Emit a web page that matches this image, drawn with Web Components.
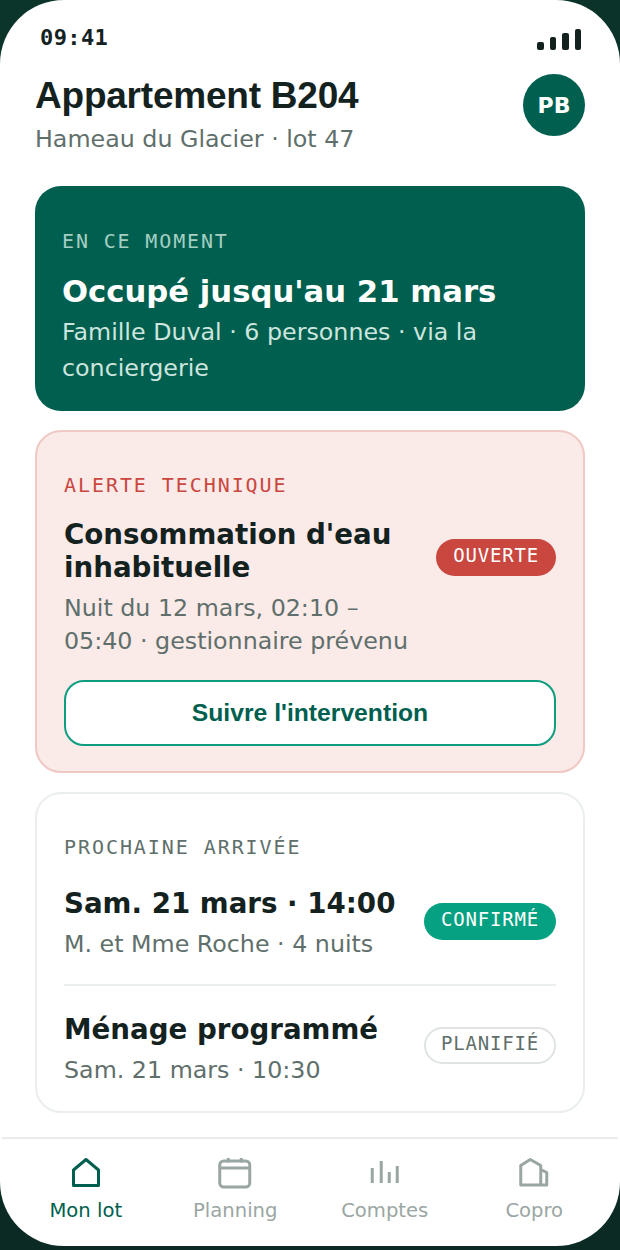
<!DOCTYPE html>
<html lang="fr"><head><meta charset="utf-8"><title>Appartement B204</title>
<style>
html,body{margin:0;padding:0;width:620px;height:1250px;overflow:hidden;background:linear-gradient(165deg,#0b352b,#0a2a23 60%);}
body{font-family:"DejaVu Sans",sans-serif;color:#14221f;}
</style></head><body>
<phone-app>
  <status-bar slot="top"></status-bar>
  <lot-header slot="top" title="Appartement B204" sub="Hameau du Glacier · lot 47" initials="PB"></lot-header>
  <hero-card eyebrow="EN CE MOMENT" title="Occupé jusqu'au 21 mars" text="Famille Duval · 6 personnes · via la conciergerie"></hero-card>
  <info-card tone="alert" eyebrow="ALERTE TECHNIQUE">
    <info-row title="Consommation d'eau inhabituelle" text="Nuit du 12 mars, 02:10 – 05:40 · gestionnaire prévenu" badge="OUVERTE" kind="danger" variant="alert"></info-row>
    <action-button label="Suivre l'intervention"></action-button>
  </info-card>
  <info-card eyebrow="PROCHAINE ARRIVÉE">
    <info-row title="Sam. 21 mars · 14:00" text="M. et Mme Roche · 4 nuits" badge="CONFIRMÉ" kind="ok" variant="first"></info-row>
    <info-row title="Ménage programmé" text="Sam. 21 mars · 10:30" badge="PLANIFIÉ" kind="plain" variant="last"></info-row>
  </info-card>
  <tab-bar slot="bottom"></tab-bar>
</phone-app>
<script>
function def(name, css, render){
  customElements.define(name, class extends HTMLElement{
    connectedCallback(){
      if(this.shadowRoot) return;
      const r=this.attachShadow({mode:'open'});
      r.innerHTML='<style>'+css+'</style>'+render(this);
    }
  });
}
const a=(e,n)=>e.getAttribute(n)||'';
def('phone-app',`
 :host{display:flex;flex-direction:column;width:620px;height:1246px;background:#fff;border-radius:64px;overflow:hidden;}
 .main{flex:1;display:flex;flex-direction:column;gap:19px;padding:0 35px;min-height:0;}
`,()=>`<slot name="top"></slot><div class="main"><slot></slot></div><slot name="bottom"></slot>`);
def('status-bar',`
 :host{display:flex;justify-content:space-between;align-items:flex-end;height:50px;padding:0 39px 0 40px;box-sizing:border-box;}
 .t{font:700 22px/26px "DejaVu Sans Mono",monospace;color:#14221f;letter-spacing:.4px;margin-bottom:-1px;}
 .s{display:flex;align-items:flex-end;gap:6px;}
 .s i{display:block;width:6.5px;background:#14221f;border-radius:2px;}
`,()=>`<span class="t">09:41</span><span class="s"><i style="height:8.5px"></i><i style="height:13px"></i><i style="height:17px"></i><i style="height:21px"></i></span>`);
def('lot-header',`
 :host{display:flex;justify-content:space-between;align-items:flex-start;padding:24px 35px 32px 35px;}
 h1{margin:0;font:700 37px/44px "Liberation Sans",Arial,sans-serif;letter-spacing:-.22px;color:#14221f;}
 p{margin:6px 0 0;font:400 23.76px/30px "DejaVu Sans",sans-serif;color:#5f6f6b;}
 .av{width:62px;height:62px;border-radius:50%;background:#005f4e;color:#fff;display:flex;align-items:center;justify-content:center;font:700 22px "DejaVu Sans",sans-serif;}
`,e=>`<div><h1>${a(e,'title')}</h1><p>${a(e,'sub')}</p></div><div class="av">${a(e,'initials')}</div>`);
def('hero-card',`
 :host{display:block;background:#005f4e;border-radius:26px;padding:42px 27px 26px 27px;color:#fff;height:225px;box-sizing:border-box;}
 .e{font:400 20px/26px "DejaVu Sans Mono",monospace;letter-spacing:1.85px;color:#a5cfc3;}
 h2{margin:18px 0 0;font:700 30.7px/40px "DejaVu Sans",sans-serif;}
 p{margin:2px 0 0;font:400 23.76px/36px "DejaVu Sans",sans-serif;color:#cde5df;}
`,e=>`<div class="e">${a(e,'eyebrow')}</div><h2>${a(e,'title')}</h2><p>${a(e,'text')}</p>`);
def('info-card',`
 :host{display:block;background:#fff;border:2px solid #ebeeee;border-radius:26px;padding:40px 27px 0 27px;box-sizing:border-box;}
 :host([tone=alert]){background:#faeae8;border-color:#f0c8c4;}
 .e{font:400 20px/26px "DejaVu Sans Mono",monospace;letter-spacing:1.93px;color:#5f6f6b;}
 :host([tone=alert]) .e{color:#c9473f;}
`,e=>`<div class="e">${a(e,'eyebrow')}</div><slot></slot>`);
def('info-row',`
 :host{display:flex;justify-content:space-between;align-items:flex-start;gap:24px;}
 :host([variant=alert]){padding:20px 0 22px;}
 :host([variant=first]){padding:27px 0 23px;border-bottom:2px solid #ebeeee;}
 :host([variant=last]){padding:27px 0 24px;}
 h3{margin:0;font:700 27.7px/33px "DejaVu Sans",sans-serif;color:#14221f;}
 p{margin:8px 0 0;font:400 23.76px/33px "DejaVu Sans",sans-serif;color:#5f6f6b;}
 .b{flex:none;font:400 19px/25px "DejaVu Sans Mono",monospace;letter-spacing:.8px;padding:4px 17px 8px;border-radius:19px;box-sizing:border-box;}
 .danger{background:#c9473f;color:#fff;margin-top:21px;}
 .ok{background:#06a182;color:#fff;margin-top:16px;}
 .plain{background:#fff;color:#5f6f6b;border:2px solid #dfe4e3;padding:2px 15px 6px;margin-top:14px;}
`,e=>`<div><h3>${a(e,'title')}</h3><p>${a(e,'text')}</p></div><span class="b ${a(e,'kind')}">${a(e,'badge')}</span>`);
def('action-button',`
 :host{display:flex;align-items:center;justify-content:center;height:66px;box-sizing:border-box;border:2px solid #0f9d80;border-radius:20px;background:#fff;color:#005f4e;font:700 24.7px "Liberation Sans",Arial,sans-serif;margin-bottom:25px;}
`,e=>a(e,'label'));
def('tab-bar',`
 :host{display:grid;grid-template-columns:repeat(4,1fr);margin:0 2px;border-top:2px solid #e8ecec;height:109px;box-sizing:border-box;padding:0 9px;}
 .t{display:flex;flex-direction:column;align-items:center;padding-top:18px;font:400 19.6px/26px "DejaVu Sans",sans-serif;color:#9aa6a3;}
 .t.on{color:#005f4e;}
 svg{display:block;width:36px;height:32px;margin-bottom:9px;fill:none;stroke:currentColor;stroke-width:3;stroke-linejoin:round;}
`,()=>`
 <div class="t on"><svg viewBox="0 0 36 32"><path d="M18 2.5 L30.5 13 V28.5 H5.5 V13 Z"/></svg>Mon lot</div>
 <div class="t"><svg viewBox="0 0 36 32"><rect x="2.75" y="4" width="30" height="26" rx="4"/><path d="M2.75 11H32.75M11.25 1V5.5M24.25 1V5.5"/></svg>Planning</div>
 <div class="t"><svg viewBox="0 0 36 32"><path d="M5.25 11V26M14.25 4V26M22.25 15V26M30.25 9V26"/></svg>Comptes</div>
 <div class="t"><svg viewBox="0 0 36 32"><path d="M4.75 28V8.5L14.25 2.5L24.75 8.5V28ZM24.75 12.5L30.75 15.5V28H24.75"/></svg>Copro</div>`);
</script>
</body></html>
